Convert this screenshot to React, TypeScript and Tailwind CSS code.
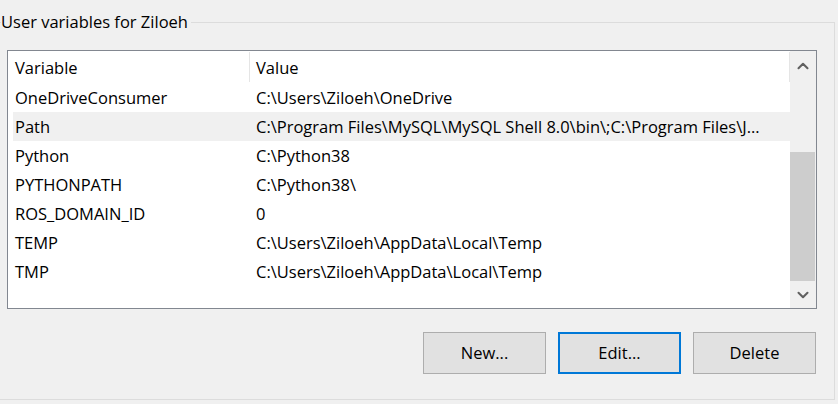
import { ChevronUp, ChevronDown } from 'lucide-react';

const rows = [
  { name: 'OneDriveConsumer', value: 'C:\\Users\\Ziloeh\\OneDrive' },
  { name: 'Path', value: 'C:\\Program Files\\MySQL\\MySQL Shell 8.0\\bin\\;C:\\Program Files\\J...', selected: true },
  { name: 'Python', value: 'C:\\Python38' },
  { name: 'PYTHONPATH', value: 'C:\\Python38\\' },
  { name: 'ROS_DOMAIN_ID', value: '0' },
  { name: 'TEMP', value: 'C:\\Users\\Ziloeh\\AppData\\Local\\Temp' },
  { name: 'TMP', value: 'C:\\Users\\Ziloeh\\AppData\\Local\\Temp' },
];

function Scrollbar() {
  return (
    <div className="w-[26px] flex flex-col bg-[#f0f0f0]">
      <div className="h-[30px] flex items-center justify-center text-[#606060]">
        <ChevronUp size={18} strokeWidth={2.75} />
      </div>
      <div className="h-[71px]" />
      <div className="h-[129px] mr-[1px] bg-[#cdcdcd]" />
      <div className="flex-1 flex items-center justify-center text-[#606060]">
        <ChevronDown size={18} strokeWidth={2.75} />
      </div>
    </div>
  );
}

function Button({ label, focused }: { label: string; focused?: boolean }) {
  return (
    <button
      className={
        focused
          ? 'w-[123px] h-[42px] bg-[#e1e1e1] border-2 border-[#0078d7] text-black text-[16.5px]'
          : 'w-[123px] h-[42px] bg-[#e1e1e1] border border-[#adadad] text-black text-[16.5px]'
      }
    >
      {label}
    </button>
  );
}

export default function App() {
  return (
    <div
      className="w-[838px] h-[404px] bg-[#f0f0f0] overflow-hidden text-black"
      style={{ fontFamily: '"Open Sans", "Noto Sans", sans-serif' }}
    >
      <div className="relative ml-[-10px] mt-[22px] w-[845px] h-[378px] border border-[#dcdcdc] pl-[16px] pt-[27px]">
        <span className="absolute left-[10px] top-[-13px] pr-[3px] bg-[#f0f0f0] text-[16.5px] leading-[24px]">
          User variables for Ziloeh
        </span>

        <div className="w-[810px] h-[259px] border border-[#828790] bg-white flex">
          <div className="flex-1 flex flex-col min-w-0">
            <div className="h-[32px] flex items-stretch text-[16.5px]">
              <div className="w-[241px] pl-[7px] pt-[2px] flex items-center">Variable</div>
              <div className="w-px my-[1px] bg-[#e5e5e5]" />
              <div className="flex-1 pl-[6px] pt-[2px] flex items-center">Value</div>
              <div className="w-px my-[1px] bg-[#e5e5e5]" />
            </div>
            {rows.map((r) => (
              <div
                key={r.name}
                className={
                  r.selected
                    ? 'h-[29px] ml-[5px] pt-[1px] flex items-center text-[16.5px] bg-[#f0f0f0]'
                    : 'h-[29px] ml-[5px] pt-[1px] flex items-center text-[16.5px]'
                }
              >
                <div className="w-[236px] pl-[2px] whitespace-nowrap overflow-hidden">{r.name}</div>
                <div className="flex-1 min-w-0 pl-[7px] pr-[2px] whitespace-nowrap overflow-hidden">
                  {r.value}
                </div>
              </div>
            ))}
          </div>
          <Scrollbar />
        </div>

        <div className="w-[810px] mt-[23px] flex justify-end gap-[12px] pr-[1px]">
          <Button label="New..." />
          <Button label="Edit..." focused />
          <Button label="Delete" />
        </div>
      </div>
    </div>
  );
}
